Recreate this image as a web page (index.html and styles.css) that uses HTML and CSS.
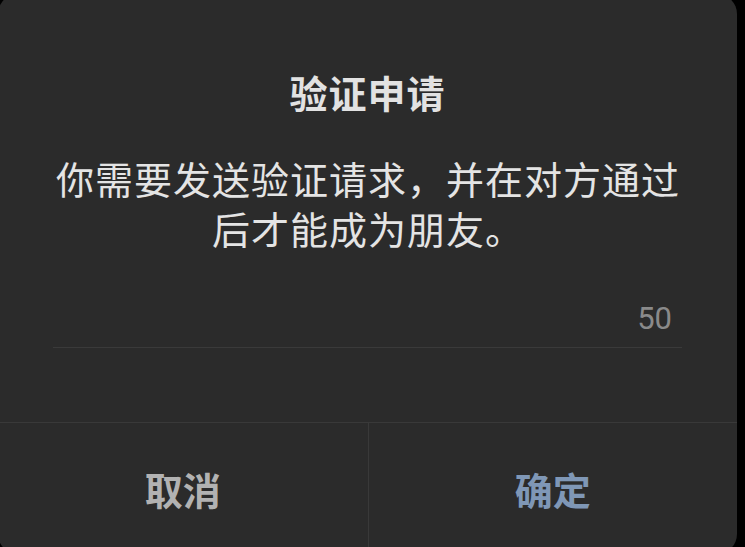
FILE: index.html
```html
<!DOCTYPE html>
<html lang="zh-CN">
<head>
<meta charset="utf-8">
<title>验证申请</title>
<link rel="stylesheet" href="styles.css">
</head>
<body>
<div class="dialog">
  <div class="title">验证申请</div>
  <div class="message">你需要发送验证请求，并在对方通过后才能成为朋友。</div>
  <div class="field">
    <span class="counter">50</span>
  </div>
  <div class="actions">
    <div class="btn btn-cancel">取消</div>
    <div class="btn btn-ok">确定</div>
  </div>
</div>
</body>
</html>
```

FILE: styles.css
```css
html, body {
  margin: 0;
  padding: 0;
  background: #000;
  overflow: hidden;
}
body {
  width: 745px;
  height: 547px;
  font-family: "Noto Sans CJK SC", "Noto Sans", sans-serif;
}
.dialog {
  box-sizing: border-box;
  margin: -6px 0 0 -2px;
  width: 739px;
  height: 560px;
  background: #2b2b2b;
  border-radius: 20px;
  display: flex;
  flex-direction: column;
  padding-top: 73px;
}
.title {
  text-align: center;
  font-size: 38px;
  line-height: 50px;
  font-weight: 700;
  letter-spacing: 1px;
  color: #e2e2e2;
}
.message {
  margin-top: 36px;
  padding: 0 52px 0 53px;
  text-align: center;
  font-size: 38px;
  line-height: 50px;
  letter-spacing: 1px;
  color: #e4e4e4;
}
.field {
  margin: 46px 55px 0;
  padding: 0 10px 8px 0;
  border-bottom: 1px solid #3a3a3a;
  display: flex;
  justify-content: flex-end;
}
.counter {
  font-family: Roboto, "Noto Sans", sans-serif;
  font-size: 31px;
  line-height: 40px;
  color: #8a8a8a;
}
.actions {
  margin-top: auto;
  height: 132px;
  box-sizing: border-box;
  border-top: 1px solid #393939;
  display: grid;
  grid-template-columns: 1fr 1fr;
}
.btn {
  display: flex;
  align-items: center;
  justify-content: center;
  font-size: 38px;
  font-weight: 700;
}
.btn-cancel {
  color: #b2b2b2;
}
.btn-ok {
  color: #7f97b6;
  border-left: 1px solid #393939;
}
```
